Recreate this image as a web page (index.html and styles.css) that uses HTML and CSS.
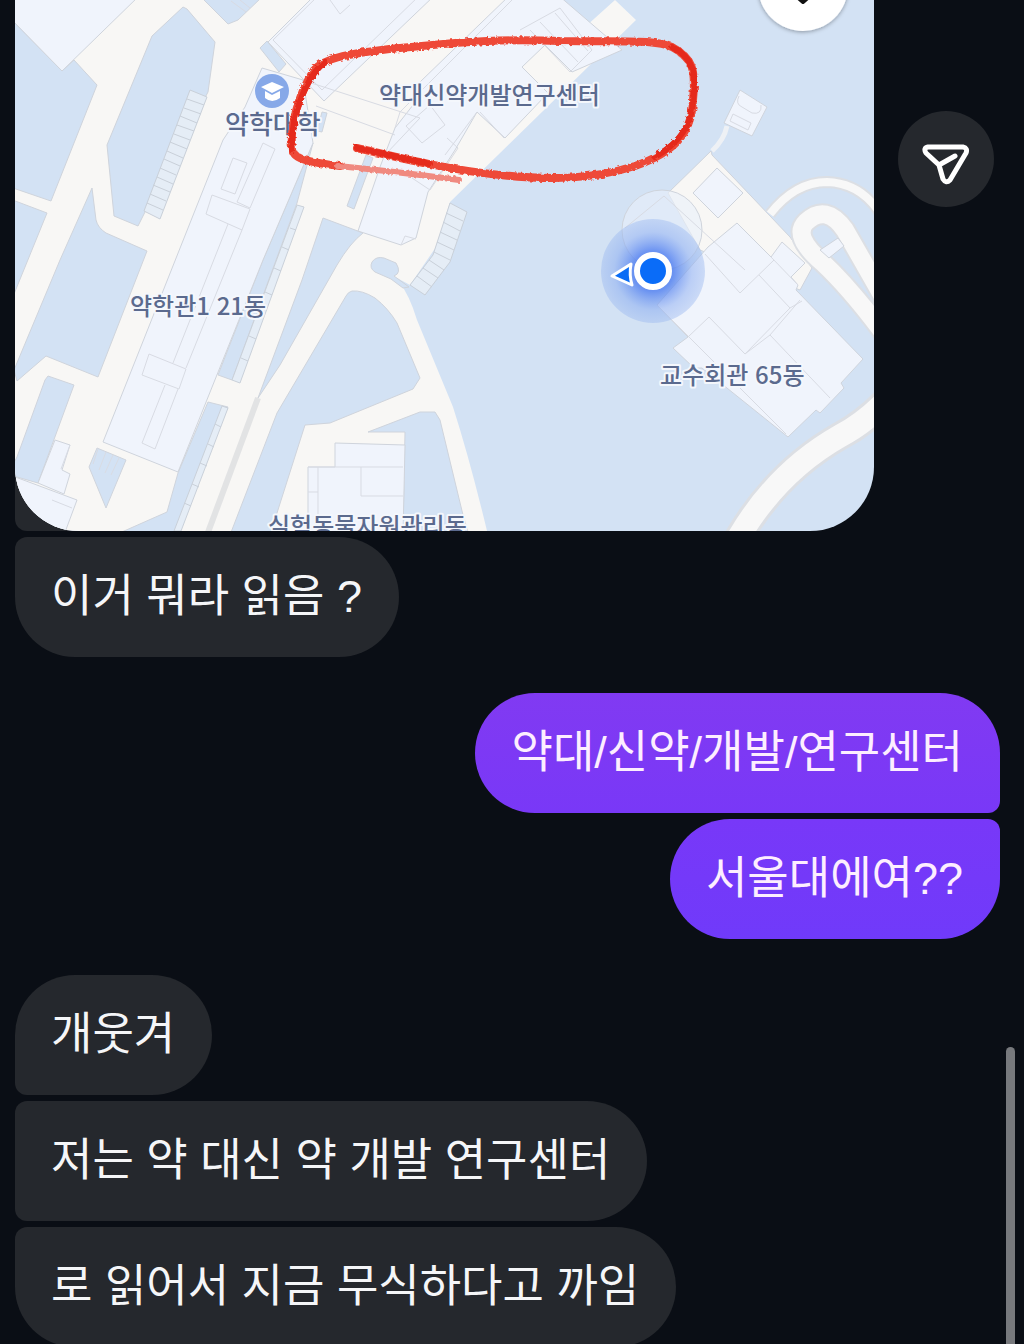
FILE: index.html
```html
<!DOCTYPE html>
<html lang="ko">
<head>
<meta charset="utf-8">
<meta name="viewport" content="width=device-width, initial-scale=1">
<title>채팅</title>
<link rel="stylesheet" href="styles.css">
</head>
<body>
<main class="chat">
  <section class="group">
    <div class="photo-row">
      <div class="photo">
        <svg class="map" viewBox="15 0 859 531" preserveAspectRatio="xMidYMid slice" role="img" aria-label="약대신약개발연구센터 지도">
          <defs>
            <radialGradient id="glow"><stop offset="0" stop-color="#2f62f0" stop-opacity=".95"/><stop offset=".4" stop-color="#4a7af0" stop-opacity=".75"/><stop offset=".75" stop-color="#86a9f0" stop-opacity=".5"/><stop offset="1" stop-color="#9dbaf0" stop-opacity=".45"/></radialGradient>
            <filter id="crayon" x="-5%" y="-10%" width="110%" height="120%"><feTurbulence type="fractalNoise" baseFrequency=".3" numOctaves="2" seed="4" result="n"/><feDisplacementMap in="SourceGraphic" in2="n" scale="4"/><feGaussianBlur stdDeviation=".5"/></filter>
            <filter id="soft" x="-20%" y="-20%" width="140%" height="140%"><feDropShadow dx="0" dy="1" stdDeviation="2" flood-opacity=".35"/></filter>
          </defs>
          <rect class="park" x="15" width="859" height="531"/>

          <path class="ground" d="M10 -5H553L585 27 615 0 636 20 450 202 436 247 410 285 397 278Q410 296 417 320L453 407Q470 460 488 535H10Z"/>

          <g class="park edge">
            <path d="M10 18 62 71 74 60 97 85 51 201 10 187Z"/>
            <path d="M10 199 47 213 14 294 10 300Z"/>
            <path d="M183 7 152 36 107 145 114 216 138 226 145 212 208 92 215 42 187 9Z"/>
            <path d="M92 188 96 220Q98 228 106 233L147 251 98 377 46 356 17 381 14 370 60 260Z"/>
            <path d="M201 -3 228 24 238 20 262 -3Z"/>
            <path d="M260 48 267 41 286 64 279 72Z"/>
            <path d="M10 470 17 457 45 380 48 376 74 385 38 483 10 475Z"/>
            <path d="M97 448 126 460 106 508 89 467Z"/>
            <path d="M323 218 363 233Q350 243 337 265L280 365 258 398 302 280Z"/>
            <path d="M313 143 297 203 232 380 218 375 263 260Z"/>
            <path d="M208 402 228 407 174 535H115L167 512 178 473Z"/>
            <path d="M352 291Q362 290 375 298 388 308 397 323L420 378 413 389 330 423 305 425 270 535H230L277 413 346 296Q348 292 352 291Z"/>
            <path d="M435 412H420L368 432H405L403 535H469L463 515 440 420Z"/>
            <path d="M322 112 327 113 322 132 317 131ZM366 155 373 158 354 209 347 206Z"/>
            <path d="M372 262Q376 256 384 258L396 263Q402 273 394 276L409 287 403 288 391 279 375 272Q369 268 372 262Z"/>
          </g>

          <g class="building edge">
            <path d="M10 -5H140L62 71 10 18Z"/>
            <path d="M262 68 303 80 313 143 263 260 178 472 103 442 223 140 245 107Z"/>
            <path d="M268 42 315 -5H435L324 101 304 80Z"/>
            <path d="M420 82 510 -5H558L622 50 572 72 545 45 522 67 548 93 505 138 477 112 455 150 428 192 416 238 401 245 358 231 380 167 395 128 413 105Z"/>
            <path d="M335 443 405 445 403 535H308V467H335Z"/>
            <path d="M55 440 70 445 62 470 70 474 64 494 38 483Z"/>
            <path d="M10 475 77 500 64 535H10Z"/>
          </g>

          <g class="lines">
            <path d="M273 40 319 -5M273 40 322 90 420 -5M302 80 420 118 385 155M316 106 395 135M330 0 340 14 350 5M395 128 400 112 512 0M430 105 445 125 422 143 406 126ZM520 30 560 8 592 50 570 72 530 30M540 22 578 62M555 13 588 51M447 138 458 148 430 190 412 178M477 112 445 155M401 245 405 236 416 239M480 112 504 138"/>
            <path d="M263 143 275 149 250 208 237 202ZM233 158 247 163 235 194 221 189ZM212 195 250 209 242 230 206 214ZM228 224 173 363M242 230 186 368M149 354 186 369 179 389 142 375ZM165 385 142 443 155 449 178 389"/>
            <path d="M308 467H403M318 467V531M361 467V496H403M308 492H318M93 464 98 449M99 470 106 452M105 473 113 455M111 475 119 458M52 500 72 508M70 445 61 469M231 1 246 12M240 0 250 8"/>
            <path class="gap" d="M258 398 207 535"/>
          </g>

          <!-- stairs -->
          <g class="steps">
            <path class="steps-bed" d="M190 90 207 97 160 219 144 211Z"/>
            <path d="M187 99 204 105M184 108 201 114M180 116 197 123M177 125 194 131M174 134 190 140M170 142 187 149M167 151 183 158M164 159 180 166M160 168 176 175M157 177 173 184M153 185 170 192M150 194 166 201M147 203 163 210"/>
            <path class="steps-bed" d="M450 203 467 212 450 262 425 295 410 285 433 255Z"/>
            <path d="M446 213 463 221M443 222 460 231M440 232 457 240M437 242 454 250M434 252 450 260M429 260 444 270M423 268 438 278M417 276 432 287"/>
            <path class="steps-bed" d="M297 205 304 207 240 383 232 380ZM222 406 228 408 181 531H174Z"/>
            <path d="M290 228 296 230M282 247 289 250M274 268 281 271M265 292 272 295M257 314 264 317M249 336 256 339M241 358 248 361M215 424 221 427M208 444 214 447M200 463 207 466M192 484 199 487M184 503 191 506"/>
          </g>

          <!-- faculty hall and its surroundings -->
          <path class="path-line" d="M727 126Q724 140 712 151"/>
          <path class="ground edge" d="M711 151 668 193 700 250 800 290 812 268 790 237 712 155Z"/>
          <path class="building edge" d="M740 90 767 107 752 136 724 123Z"/>
          <path class="lines" d="M739 96Q735 104 742 107L752 113Q762 115 761 105M733 114 751 123 748 130 730 121Z"/>
          <path class="road-case" stroke-width="12" d="M770 214Q795 182 827 182 860 183 880 213"/>
          <path class="road" stroke-width="8" d="M770 214Q795 182 827 182 860 183 880 213"/>
          <path class="road-case" stroke-width="22" d="M885 335Q850 288 822 262 792 236 806 222 826 203 845 230L885 300"/>
          <path class="road" stroke-width="18" d="M885 335Q850 288 822 262 792 236 806 222 826 203 845 230L885 300"/>
          <path class="building edge" d="M820 250 838 238 844 246 829 258Z"/>
          <g class="building edge">
            <path d="M717 168 743 193 718 218 693 193Z"/>
            <path d="M737 223 771 257 782 242 805 263 791 277 798 285 796 290 863 359 841 383 844 388 820 413 816 410 788 437 702 368 694 368 673 348 688 337 657 305 708 247Z"/>
            <circle class="rotunda" cx="662" cy="230" r="40"/>
          </g>
          <path class="lines" d="M705 254 740 293 774 260M759 275 790 308 745 354 709 317 688 337M800 300 770 335 830 398M657 305 786 434M625 228 664 196 745 270M745 354 770 335M790 308 802 301M771 257 798 285"/>
          <path class="road-case" stroke-width="29" d="M736 542Q775 473 840 436 863 424 885 402"/>
          <path class="road" stroke-width="23" d="M736 542Q775 473 840 436 863 424 885 402"/>

          <!-- current location -->
          <circle cx="653" cy="271" r="52" fill="url(#glow)"/>
          <path class="heading" d="M612 276 631 264Q629 275 632 285Z"/>
          <circle class="me" cx="653" cy="271" r="16"/>

          <g filter="url(#soft)"><circle cx="803" cy="-14" r="45" fill="#fff"/></g>
          <path class="chevron" d="M795 -5 803 2 811 -5"/>

          <!-- college marker -->
          <circle cx="272" cy="91" r="17" fill="#86a8e8"/>
          <path fill="#fff" d="M261 87 272 82 284 87 272 93ZM265 91 272 95 280 91V98Q272 104 265 98Z"/>

          <g class="label">
            <text x="225" y="134" class="label-lg">약학대학</text>
            <text x="379" y="104">약대신약개발연구센터</text>
            <text x="130" y="315">약학관1 21동</text>
            <text x="660" y="384">교수회관 65동</text>
            <text x="268" y="535">실험동물자원관리동</text>
          </g>

          <g class="crayon" filter="url(#crayon)">
            <path d="M357 148C400 158 450 170 500 175S590 180 635 166C672 153 692 135 693 100 696 70 693 58 672 47 655 40 640 42 560 41 480 38 440 45 400 48 340 54 322 60 314 70 298 95 290 125 292 150 294 160 315 163 340 166"/>
            <path class="fade" d="M338 166Q400 172 459 180"/>
            <path class="press" d="M357 148Q385 154 430 164M672 47C694 58 697 75 693 100 692 125 680 143 655 157M325 62C308 75 290 115 292 150"/>
          </g>
        </svg>
      </div>
      <button class="share" type="button" aria-label="공유">
        <svg viewBox="0 0 48 48" aria-hidden="true"><path d="M6 5H41Q46 6 44 11L28 38Q24 42 21 37L17 23 4 11Q1 6 6 5ZM17 23 33 14"/></svg>
      </button>
    </div>
    <p class="bubble in joined-top">이거 뭐라 읽음 ?</p>
  </section>

  <section class="group">
    <p class="bubble out joined-bottom">약대/신약/개발/연구센터</p>
    <p class="bubble out out-deep joined-top">서울대에여??</p>
  </section>

  <section class="group">
    <p class="bubble in joined-bottom">개웃겨</p>
    <p class="bubble in joined-top joined-bottom">저는 약 대신 약 개발 연구센터</p>
    <p class="bubble in joined-top">로 읽어서 지금 무식하다고 까임</p>
  </section>
  <div class="scroll-thumb"></div>
</main>
</body>
</html>
```
FILE: styles.css
```css
* { box-sizing: border-box; }

body {
  margin: 0;
  background: #0a0e15;
  color: #f5f6f8;
  font-family: "Noto Sans CJK KR", sans-serif;
}

.chat {
  position: relative;
  display: flex;
  flex-direction: column;
  gap: 36px;
  height: 100vh;
  padding: 0 24px 0 15px;
  overflow: hidden;
}

.group {
  display: flex;
  flex: none;
  flex-direction: column;
  gap: 6px;
}

.photo-row {
  display: grid;
  grid-template-columns: minmax(0, 859px) 96px;
  gap: 24px;
  align-items: start;
}

.photo {
  background: #25282d;
  border-radius: 0 0 64px 12px;
}

.map {
  display: block;
  width: 100%;
  border-radius: 0 0 64px 64px;
}

.share {
  display: grid;
  place-items: center;
  width: 96px;
  height: 96px;
  margin: 111px 0 0;
  padding: 0;
  border: 0;
  border-radius: 50%;
  background: #25282d;
}

.share svg {
  width: 48px;
  height: 48px;
  margin-top: 14px;
  fill: none;
  stroke: #fff;
  stroke-width: 5;
  stroke-linecap: round;
  stroke-linejoin: round;
}

.bubble {
  margin: 0;
  padding: 28px 37px 28px 36px;
  border-radius: 60px;
  font-family: "Liberation Sans", "Noto Sans CJK KR", sans-serif;
  font-size: 45px;
  line-height: 64px;
}

.in {
  align-self: flex-start;
  background: #25282d;
}

.in.joined-top { border-top-left-radius: 12px; }
.in.joined-bottom { border-bottom-left-radius: 12px; }

.out {
  align-self: flex-end;
  background: linear-gradient(#813af2, #7938f7);
  color: #fdeeff;
}

.out-deep { background: linear-gradient(#7838f8, #703afa); }
.out.joined-top { border-top-right-radius: 12px; }
.out.joined-bottom { border-bottom-right-radius: 12px; }

.scroll-thumb {
  position: absolute;
  right: 9px;
  bottom: -12px;
  width: 9px;
  height: 309px;
  border-radius: 5px;
  background: #77797d;
}

/* map */
.park { fill: #d3e2f4; }
.ground { fill: #f8f7f5; }
.building { fill: #f0f4fc; }
.edge { stroke: #cfd4dc; stroke-width: 1; }
.lines { fill: none; stroke: #d8dbe3; stroke-width: 1; }
.lines .gap { stroke: #e2e3e4; stroke-width: 6; }
.steps { fill: none; stroke: #c9d0d9; stroke-width: 1; }
.steps-bed { fill: #e5edf6; }
.rotunda { fill: #e9f0fa; fill-opacity: 0.6; }
.path-line { fill: none; stroke: #eef1f5; stroke-width: 5; }
.road { fill: none; stroke: #f8f8f8; }
.road-case { fill: none; stroke: #dcdfe4; }
.heading { fill: #0a6cf5; stroke: #fff; stroke-width: 3; stroke-linejoin: round; }
.me { fill: #0a6cf8; stroke: #fff; stroke-width: 6; }
.chevron { fill: none; stroke: #111; stroke-width: 4; stroke-linecap: round; stroke-linejoin: round; }

.label {
  fill: #5b6a8e;
  stroke: #f4f7fc;
  stroke-width: 4;
  stroke-linejoin: round;
  paint-order: stroke;
  font-size: 24px;
  font-weight: 500;
}

.label-lg { font-size: 26px; }

.crayon { fill: none; stroke: #ee4a38; stroke-width: 8; stroke-linecap: round; }
.crayon .fade { stroke: #f08a80; stroke-width: 6; }
.crayon .press { stroke: #e52a1c; stroke-width: 6; }
```
